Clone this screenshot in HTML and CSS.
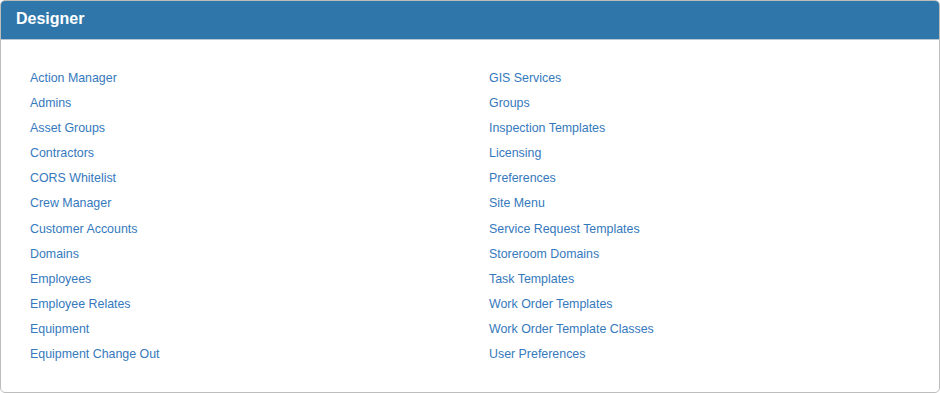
FILE: index.html
```html
<!DOCTYPE html>
<html lang="en">
<head>
    <meta charset="UTF-8">
    <title>Designer</title>
    <link rel="stylesheet" href="styles.css">
</head>
<body>
    <div class="panel">
        <div class="panel-heading">Designer</div>
        <div class="panel-body">
            <ul class="link-list">
                <li><a href="#">Action Manager</a></li>
                <li><a href="#">Admins</a></li>
                <li><a href="#">Asset Groups</a></li>
                <li><a href="#">Contractors</a></li>
                <li><a href="#">CORS Whitelist</a></li>
                <li><a href="#">Crew Manager</a></li>
                <li><a href="#">Customer Accounts</a></li>
                <li><a href="#">Domains</a></li>
                <li><a href="#">Employees</a></li>
                <li><a href="#">Employee Relates</a></li>
                <li><a href="#">Equipment</a></li>
                <li><a href="#">Equipment Change Out</a></li>
            </ul>
            <ul class="link-list">
                <li><a href="#">GIS Services</a></li>
                <li><a href="#">Groups</a></li>
                <li><a href="#">Inspection Templates</a></li>
                <li><a href="#">Licensing</a></li>
                <li><a href="#">Preferences</a></li>
                <li><a href="#">Site Menu</a></li>
                <li><a href="#">Service Request Templates</a></li>
                <li><a href="#">Storeroom Domains</a></li>
                <li><a href="#">Task Templates</a></li>
                <li><a href="#">Work Order Templates</a></li>
                <li><a href="#">Work Order Template Classes</a></li>
                <li><a href="#">User Preferences</a></li>
            </ul>
        </div>
    </div>
</body>
</html>
```

FILE: styles.css
```css
body {
    font-family: "Liberation Sans", Arial, sans-serif;
    margin: 0;
    padding: 0;
    background-color: #FFFFFF;
}
.panel {
    width: 940px;
    height: 393px;
    box-sizing: border-box;
    border: 1px solid #BDBDBD;
    border-radius: 5px;
    overflow: hidden;
}
.panel-heading {
    background-color: #2F77AB; /* Blue */
    color: #FFFFFF;
    font-size: 16px;
    font-weight: bold;
    height: 38px;
    line-height: 35px;
    padding: 0 15px;
    border-bottom: 1px solid #B8C6D2;
}
.panel-body {
    display: grid;
    grid-template-columns: 439px 439px;
    column-gap: 20px;
    padding: 26px 29px 0;
}
.link-list {
    list-style: none;
    margin: 0;
    padding: 0;
}
.link-list li {
    height: 25.1px;
    line-height: 25px;
    font-size: 12.4px;
}
.link-list a {
    color: #3579BD;
    text-decoration: none;
}
```
